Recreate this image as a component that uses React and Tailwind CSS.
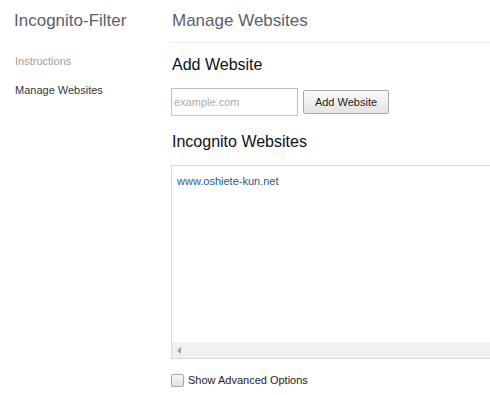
import React from "react";

export default function App() {
  return (
    <div className="w-[490px] h-[395px] overflow-hidden bg-white flex" style={{ fontFamily: '"Liberation Sans", "Noto Sans CJK JP", sans-serif' }}>
      <div className="w-[171px] shrink-0 pl-[14px] pt-[10px]">
        <div className="text-[17px] leading-[22px] text-[#5c6166]">Incognito-Filter</div>
        <div className="mt-[22px] pl-[1px] text-[11px] leading-[14px] text-[#a0a0a0]">Instructions</div>
        <div className="mt-[15px] pl-[1px] text-[11px] leading-[14px] text-[#303942]">Manage Websites</div>
      </div>
      <div className="flex-1 min-w-0 pt-[10px]">
        <div className="pl-[1px] text-[17px] leading-[22px] text-[#5c6166]">Manage Websites</div>
        <div className="mt-[10px] -ml-[1px] h-px bg-[#eeeeee]" />
        <div className="mt-[11px] pl-[1px] text-[16px] leading-[22px] text-[#111]">Add Website</div>
        <div className="mt-[12px] flex items-center gap-[5px]">
          <div className="w-[127px] h-[28px] border border-[#bfbfbf] flex items-center pl-[2px] text-[11px] text-[#aaa]">example.com</div>
          <div className="w-[86px] h-[24px] border border-[#aaa] rounded-[2px] bg-gradient-to-b from-[#fafafa] to-[#e4e4e4] flex items-center justify-center text-[11px] text-[#222]">Add Website</div>
        </div>
        <div className="mt-[15px] pl-[1px] text-[16px] leading-[22px] text-[#111]">Incognito Websites</div>
        <div className="mt-[12px] w-[330px] h-[194px] border border-[#d9d9d9] flex flex-col">
          <div className="flex-1 pl-[5px] pt-[8px] text-[11px] leading-[14px] text-[#2a5b8a]">www.oshiete-kun.net</div>
          <div className="h-[16px] bg-[#f0f0f0] flex items-center pl-[5px]">
            <svg width="4" height="7" viewBox="0 0 4 7"><path d="M4 0 L0 3.5 L4 7 Z" fill="#a3a3a3" /></svg>
          </div>
        </div>
        <div className="mt-[14px] flex items-center gap-[4px]">
          <div className="w-[13px] h-[13px] border border-[#a8a8a8] rounded-[2px] bg-gradient-to-b from-[#f8f8f8] to-[#e0e0e0]" />
          <div className="text-[11px] leading-[14px] text-[#222]">Show Advanced Options</div>
        </div>
      </div>
    </div>
  );
}
